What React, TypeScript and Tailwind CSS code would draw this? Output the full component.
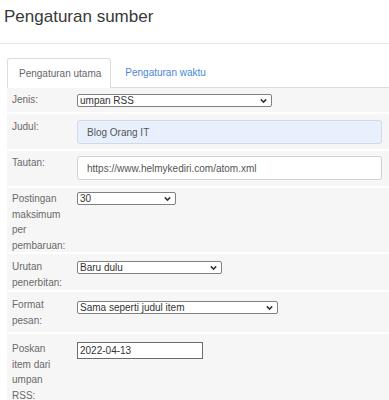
import React from "react";

function Chevron() {
  return (
    <svg
      className="pointer-events-none absolute right-[5px] top-1/2 -translate-y-1/2"
      width="7"
      height="5"
      viewBox="0 0 7 5"
    >
      <path d="M0.8 0.9 L3.5 3.6 L6.2 0.9" fill="none" stroke="#333" strokeWidth="1.5" />
    </svg>
  );
}

function Select({ value, wrap }: { value: string; wrap: string }) {
  return (
    <div className={wrap}>
      <select
        defaultValue={value}
        className="block w-full h-full appearance-none border border-[#808080] rounded-[2px] bg-white text-[10px] leading-[11px] pl-[2px] py-0 text-[#333] outline-none"
      >
        <option>{value}</option>
      </select>
      <Chevron />
    </div>
  );
}

function Label({ children, cls }: { children: React.ReactNode; cls: string }) {
  return (
    <div className={cls}>
      <div className="text-[10px] leading-[15.5px] text-[#6a6a6a]">{children}</div>
    </div>
  );
}

export default function App() {
  return (
    <div className="w-[389px] h-[400px] overflow-hidden bg-white font-['Liberation_Sans',Arial,sans-serif]">
      <div className="h-[44px] border-b border-[#e8e8e8] pt-[7px] pl-[4px]">
        <h1 className="text-[17px] leading-[20px] text-[#383838] font-normal">Pengaturan sumber</h1>
      </div>

      <div className="ml-[7px] mt-[14px] flex border-b border-[#dcdcdc] h-[30px]">
        <div className="h-[30px] -mb-px border border-b-0 border-[#dcdcdc] bg-white rounded-t-[3px] pl-[11px] pr-[9px] flex items-center text-[10px] text-[#666]">
          Pengaturan utama
        </div>
        <div className="h-[29px] pl-[14px] flex items-center text-[10px] text-[#4a88d8]">
          Pengaturan waktu
        </div>
      </div>

      <div className="ml-[7px]">
        {/* Jenis */}
        <div className="flex h-[24px] bg-[#f6f6f6]">
          <Label cls="w-[70px] shrink-0 pl-[5px] pt-[4px]">Jenis:</Label>
          <div className="pt-[6px]">
            <Select value="umpan RSS" wrap="relative w-[195px] h-[13px]" />
          </div>
        </div>

        {/* Judul */}
        <div className="flex h-[35px] mt-[2px] bg-[#f6f6f6]">
          <Label cls="w-[70px] shrink-0 pl-[5px] pt-[5px]">Judul:</Label>
          <div className="pt-[6px]">
            <input
              defaultValue="Blog Orang IT"
              className="block w-[305px] h-[24px] border border-[#d3d9e3] rounded-[3px] bg-[#e8f0fe] pl-[9px] text-[10px] text-[#555] outline-none"
            />
          </div>
        </div>

        {/* Tautan */}
        <div className="flex h-[35px] mt-[2px] bg-[#f6f6f6]">
          <Label cls="w-[70px] shrink-0 pl-[5px] pt-[4px]">Tautan:</Label>
          <div className="pt-[5px]">
            <input
              defaultValue="https://www.helmykediri.com/atom.xml"
              className="block w-[305px] h-[24px] border border-[#d2d2d2] rounded-[3px] bg-white pl-[9px] text-[10px] text-[#555] outline-none"
            />
          </div>
        </div>

        {/* Postingan */}
        <div className="flex h-[64px] mt-[2px] bg-[#f6f6f6]">
          <Label cls="w-[70px] shrink-0 pl-[5px] pt-[3px]">
            Postingan
            <br />
            maksimum
            <br />
            per
            <br />
            pembaruan:
          </Label>
          <div className="pt-[4px]">
            <Select value="30" wrap="relative w-[99px] h-[13px]" />
          </div>
        </div>

        {/* Urutan */}
        <div className="flex h-[36px] mt-[2px] bg-[#f6f6f6]">
          <Label cls="w-[70px] shrink-0 pl-[5px] pt-[5px]">
            Urutan
            <br />
            penerbitan:
          </Label>
          <div className="pt-[7px]">
            <Select value="Baru dulu" wrap="relative w-[145px] h-[13px]" />
          </div>
        </div>

        {/* Format */}
        <div className="flex h-[40px] mt-[2px] bg-[#f6f6f6]">
          <Label cls="w-[70px] shrink-0 pl-[5px] pt-[5px]">
            Format
            <br />
            pesan:
          </Label>
          <div className="pt-[9px]">
            <Select value="Sama seperti judul item" wrap="relative w-[201px] h-[13px]" />
          </div>
        </div>

        {/* Poskan */}
        <div className="flex h-[80px] mt-[2px] bg-[#f6f6f6]">
          <Label cls="w-[70px] shrink-0 pl-[5px] pt-[7px]">
            Poskan
            <br />
            item dari
            <br />
            umpan
            <br />
            RSS:
          </Label>
          <div className="pt-[8px]">
            <input
              defaultValue="2022-04-13"
              className="block w-[126px] h-[17px] border border-[#6b6b6b] bg-white pl-[2px] text-[10px] text-[#333] outline-none"
            />
          </div>
        </div>
      </div>
    </div>
  );
}
